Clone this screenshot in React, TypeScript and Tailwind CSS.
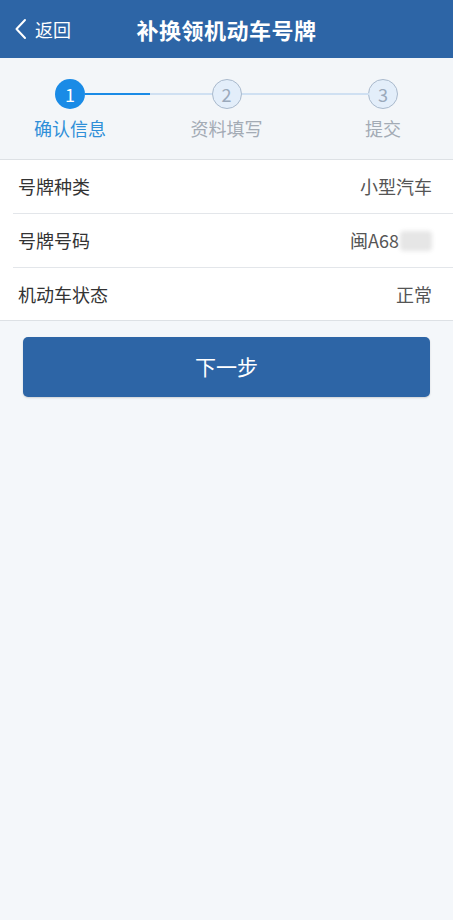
import React from "react";

const font = { fontFamily: '"Noto Sans CJK SC", "Noto Sans", sans-serif' };

function Step({ n, label, active }: { n: number; label: string; active?: boolean }) {
  return (
    <div className="flex flex-col items-center w-[90px]">
      <div
        className={
          active
            ? "w-[30px] h-[30px] rounded-full bg-[#1a8be6] text-white flex items-center justify-center text-[18px] leading-none"
            : "w-[30px] h-[30px] rounded-full bg-[#e3eefa] border-[1.5px] border-[#a9b9cc] text-[#9aa9bb] flex items-center justify-center text-[18px] leading-none"
        }
      >
        {n}
      </div>
      <div
        className={
          "mt-[7px] text-[18px] leading-[24px] " + (active ? "text-[#2f8fd8]" : "text-[#a3abb5]")
        }
      >
        {label}
      </div>
    </div>
  );
}

function Row({ left, right, last }: { left: string; right: React.ReactNode; last?: boolean }) {
  return (
    <div className="pl-[13px]">
      <div
        className={
          "flex items-center justify-between pl-[5px] pr-[21px] " +
          (last ? "h-[52px]" : "h-[54px] border-b border-[#e3e6ea]")
        }
      >
        <span className="text-[18px] text-[#333333]">{left}</span>
        <span className="text-[18px] text-[#555555]">{right}</span>
      </div>
    </div>
  );
}

export default function App() {
  return (
    <div className="min-h-[920px] bg-[#f4f7fa]" style={font}>
      <div className="h-[58px] bg-[#2d65a6] relative flex items-center justify-center">
        <div className="absolute left-[14px] top-0 h-[58px] flex items-center gap-[8px]">
          <svg width="13" height="22" viewBox="0 0 13 22" fill="none">
            <path d="M11 2 L2.5 11 L11 20" stroke="white" strokeWidth="2" strokeLinecap="round" strokeLinejoin="round" />
          </svg>
          <span className="text-white text-[18px]">返回</span>
        </div>
        <span className="text-white text-[22px] font-bold tracking-[0.5px]">补换领机动车号牌</span>
      </div>

      <div className="h-[102px] bg-[#f3f6f9] border-b border-[#dde1e5] relative">
        <div className="absolute left-[85px] top-[35px] w-[65px] h-[2px] bg-[#1a8be6]" />
        <div className="absolute left-[150px] top-[35px] w-[62px] h-[1.5px] bg-[#cfe0f2]" />
        <div className="absolute left-[242px] top-[35px] w-[127px] h-[1.5px] bg-[#cfe0f2]" />
        <div className="flex justify-between px-[25px] pt-[21px]">
          <Step n={1} label="确认信息" active />
          <Step n={2} label="资料填写" />
          <Step n={3} label="提交" />
        </div>
      </div>

      <div className="bg-white border-b border-[#dde1e5]">
        <Row left="号牌种类" right="小型汽车" />
        <Row
          left="号牌号码"
          right={
            <span className="flex items-center">
              闽A68
              <span className="inline-block w-[32px] h-[20px] bg-[#e6e6e6] rounded-[4px] blur-[2px] ml-[1px]" />
            </span>
          }
        />
        <Row left="机动车状态" right="正常" last />
      </div>

      <div className="px-[23px] pt-[16px]">
        <div className="h-[60px] rounded-[5px] bg-[#2d65a6] flex items-center justify-center text-white text-[21px] shadow-[0_1px_2px_rgba(0,0,0,0.15)]">
          下一步
        </div>
      </div>
    </div>
  );
}
